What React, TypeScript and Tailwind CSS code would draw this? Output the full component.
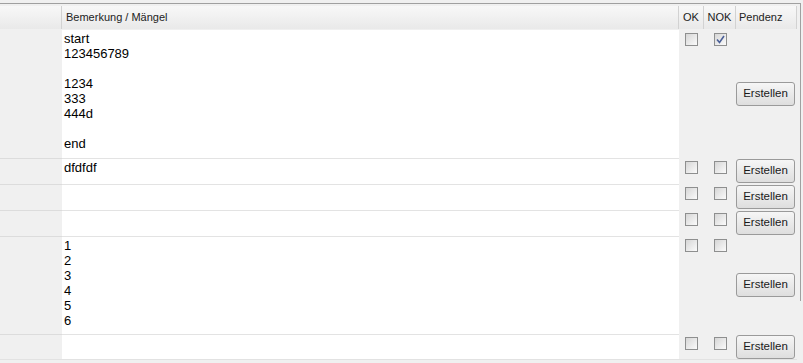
const rows = [
  { h: "h-[128px]", text: ["start", "123456789", "", "1234", "333", "444d", "", "end"], nok: true },
  { h: "h-[26px]", text: ["dfdfdf"] },
  { h: "h-[26px]", text: [] },
  { h: "h-[26px]", text: [] },
  { h: "h-[98px]", text: ["1", "2", "3", "4", "5", "6"] },
  { h: "h-[26px]", text: [] },
];

const cols = "grid grid-cols-[62px_617px_25px_32px_61px]";

function CheckBox({ checked = false }: { checked?: boolean }) {
  return (
    <div className="w-[13px] h-[13px] border border-[#8e8f8f] bg-gradient-to-br from-[#d6d6d6] to-[#fbfbfb] flex items-center justify-center">
      {checked && (
        <svg width="9" height="9" viewBox="0 0 9 9">
          <path d="M1 4.5 L3.5 7.5 L8 1" fill="none" stroke="#4a5f97" strokeWidth="1.6" />
        </svg>
      )}
    </div>
  );
}

function Button() {
  return (
    <button className="w-[59px] h-[24px] rounded-[3px] border border-[#9a9a9a] bg-gradient-to-b from-[#f6f6f6] to-[#dedede] text-[11.5px] text-[#1a1a1a]">
      Erstellen
    </button>
  );
}

export default function App() {
  return (
    <div className="w-[803px] h-[363px] bg-[#f0f0f0] overflow-hidden font-['Liberation_Sans',Arial,sans-serif]">
      <div className="w-[801px] h-[298px] mt-[3px] absolute border-t border-r border-[#a0a0a0] pointer-events-none" />
      <div className="pt-[6px] w-[797px]">
        <div className={`${cols} h-[23px] text-[11px] text-[#222]`}>
          <div className="bg-gradient-to-b from-[#f8f8f8] to-[#e9e9e9] border-r border-[#d2d2d2]" />
          <div className="bg-gradient-to-b from-[#f8f8f8] to-[#e9e9e9] border-r border-[#d2d2d2] pl-[4px] flex items-center">
            Bemerkung / Mängel
          </div>
          <div className="bg-gradient-to-b from-[#f8f8f8] to-[#e9e9e9] border-r border-[#d2d2d2] flex items-center justify-center">
            OK
          </div>
          <div className="bg-gradient-to-b from-[#f8f8f8] to-[#e9e9e9] border-r border-[#d2d2d2] flex items-center justify-center">
            NOK
          </div>
          <div className="bg-gradient-to-b from-[#f8f8f8] to-[#e9e9e9] border-r border-[#d2d2d2] flex items-center pl-[3px]">
            Pendenz
          </div>
        </div>
        <div className="h-px" />
        {rows.map((r, i) => (
          <div key={i} className={`${cols} ${r.h} ${i === rows.length - 1 ? "border-b border-[#e2e2e2]" : ""}`}>
            <div className={`${i > 0 ? "border-t border-[#dcdcdc]" : ""}`} />
            <div className={`bg-white pl-[2px] pt-px text-[13px] leading-[15px] text-black ${i > 0 ? "border-t border-[#e3e3e3]" : ""}`}>
              {r.text.map((t, j) => (
                <div key={j} className="h-[15px]">{t}</div>
              ))}
            </div>
            <div className="flex justify-center pt-[3px]">
              <CheckBox />
            </div>
            <div className="flex justify-center pt-[3px]">
              <CheckBox checked={r.nok} />
            </div>
            <div className="flex items-center">
              <Button />
            </div>
          </div>
        ))}
      </div>
    </div>
  );
}
